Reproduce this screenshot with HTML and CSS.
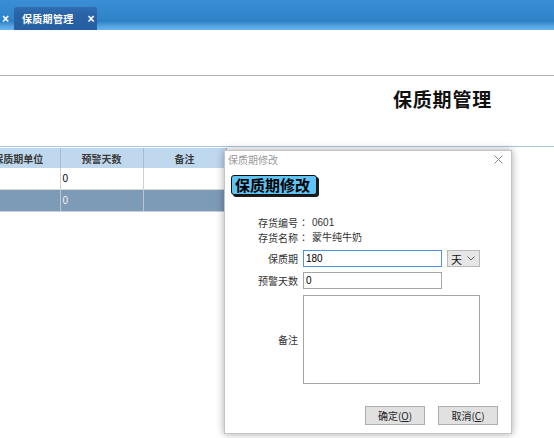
FILE: index.html
```html
<!DOCTYPE html>
<html lang="zh">
<head>
<meta charset="utf-8">
<title>保质期管理</title>
<link rel="stylesheet" href="styles.css">
</head>
<body>
<div class="topbar">
  <span class="tab-x-left">×</span>
  <div class="tab"><span class="tab-label">保质期管理</span><span class="tab-x">×</span></div>
</div>
<div class="spacer"></div>
<div class="rule"></div>
<div class="titlebar"><h1 class="page-title">保质期管理</h1></div>
<div class="gridline"></div>
<div class="grid-wrap">
  <table class="grid">
    <thead>
      <tr><th>保质期单位</th><th>预警天数</th><th>备注</th></tr>
    </thead>
    <tbody>
      <tr class="row"><td></td><td>0</td><td></td></tr>
      <tr class="row selected"><td></td><td>0</td><td></td></tr>
    </tbody>
  </table>
</div>

<div class="dialog">
  <div class="dlg-head">
    <span class="dlg-title">保质期修改</span>
    <svg class="dlg-close" width="9" height="9" viewBox="0 0 9 9"><path d="M0.5 0.5L8.5 8.5M8.5 0.5L0.5 8.5" stroke="#8a8a8a" stroke-width="1" fill="none"/></svg>
  </div>
  <div class="badge">保质期修改</div>
  <div class="info">
    <div class="line"><span class="lbl">存货编号</span><span class="colon">：</span><span class="val">0601</span></div>
    <div class="line"><span class="lbl">存货名称</span><span class="colon">：</span><span class="val">蒙牛纯牛奶</span></div>
  </div>
  <div class="frow">
    <span class="lbl">保质期</span>
    <div class="input focus">180</div>
    <div class="select"><span>天</span>
      <svg width="8" height="5" viewBox="0 0 8 5"><path d="M0.5 0.5L4 4L7.5 0.5" stroke="#666" fill="none"/></svg>
    </div>
  </div>
  <div class="frow">
    <span class="lbl">预警天数</span>
    <div class="input">0</div>
  </div>
  <div class="frow area-row">
    <span class="lbl">备注</span>
    <div class="textarea"></div>
  </div>
  <div class="buttons">
    <div class="btn">确定(<u>O</u>)</div>
    <div class="btn">取消(<u>C</u>)</div>
  </div>
</div>
</body>
</html>
```
FILE: styles.css
```css
html, body {
  margin: 0;
  padding: 0;
  background: #fff;
  width: 554px;
  height: 438px;
  overflow: hidden;
  font-family: "Liberation Sans", "Noto Sans CJK SC", sans-serif;
  position: relative;
}

.topbar {
  height: 30px;
  display: flex;
  align-items: flex-end;
  background: linear-gradient(#3a8ed4 0px, #2f84ca 18px, #2b7fc5 21px, #4c9cdc 25px, #6cb4ec 30px);
}
.tab-x-left {
  color: #fff;
  font-weight: bold;
  font-size: 12px;
  line-height: 22px;
  width: 14px;
  padding-left: 2px;
  box-sizing: border-box;
}
.tab {
  width: 83px;
  height: 23px;
  background: linear-gradient(#2f6cb0, #2862a5 40%, #2660a2);
  border-radius: 3px 3px 0 0;
  display: flex;
  align-items: center;
  color: #fff;
  font-weight: bold;
  font-size: 10px;
  box-sizing: border-box;
  padding-left: 8px;
}
.tab-label {
  letter-spacing: 0.3px;
  font-family: "Noto Sans CJK SC", sans-serif;
}
.tab-x {
  margin-left: 14px;
  font-size: 12px;
}

.spacer { height: 45px; }
.rule { height: 1px; background: #b4b4b4; }
.titlebar {
  height: 70px;
  padding-right: 62px;
  text-align: right;
  box-sizing: border-box;
  padding-top: 11px;
}
.page-title {
  margin: 0;
  font-size: 19px;
  line-height: 24px;
  font-weight: 600;
  letter-spacing: 0.8px;
  color: #111;
  font-family: "Noto Sans CJK SC", serif;
}
.gridline { height: 1px; background: #a9c7e4; }

.grid-wrap { margin-top: 1px; margin-left: -23px; }
.grid {
  border-collapse: collapse;
  table-layout: fixed;
  font-size: 10px;
}
.grid th, .grid td {
  width: 83px;
  padding: 0 2px;
  box-sizing: border-box;
}
.grid th {
  height: 20px;
  background: #bfd8ee;
  color: #3a3a3a;
  font-weight: bold;
  font-family: "Noto Sans CJK SC", sans-serif;
  border-right: 1px solid #a4bccf;
  text-align: center;
}
.grid td {
  height: 21px;
  border-right: 1px solid #cfcfcf;
  border-bottom: 1px solid #d8d8d8;
  color: #000;
}
.grid .selected td {
  height: 22px;
  background: #7d9ab7;
  color: #f2f2f2;
  border-right: 1px solid #b9c6d2;
  border-bottom: 1px solid #c8d0d8;
}

.dialog {
  position: absolute;
  left: 224px;
  top: 150px;
  width: 288px;
  height: 284px;
  box-sizing: border-box;
  background: #fff;
  border: 1px solid #c4c4c4;
  box-shadow: 0 0 8px rgba(0, 0, 0, 0.35);
  font-size: 10px;
  color: #333;
  font-family: "Liberation Sans", "Noto Sans CJK SC", sans-serif;
}
.dlg-head {
  height: 17px;
  display: flex;
  align-items: center;
  justify-content: space-between;
  padding: 0 8px 0 3px;
}
.dlg-title {
  color: #9a9a9a;
  font-size: 10px;
  font-family: "Noto Sans CJK SC", sans-serif;
}
.badge {
  margin: 7px 0 0 6px;
  width: 86px;
  height: 20px;
  box-sizing: border-box;
  border: 1px solid #111;
  border-radius: 3px;
  background: #5ec4f5;
  box-shadow: 2px 2px 0 #1a1a1a;
  font-size: 15px;
  font-weight: bold;
  line-height: 18px;
  color: #000;
  padding-left: 3px;
  font-family: "Noto Sans CJK SC", sans-serif;
}
.info { margin-top: 20px; }
.line {
  display: flex;
  height: 15px;
  line-height: 15px;
}
.lbl {
  width: 73px;
  text-align: right;
  font-family: "Noto Sans CJK SC", sans-serif;
  flex: none;
}
.colon { width: 12px; text-align: center; margin-left: 2px; }
.val { font-family: "Liberation Sans", "Noto Sans CJK SC", sans-serif; }

.frow {
  display: flex;
  align-items: center;
  margin-top: 5px;
}
.frow .input, .frow .textarea { margin-left: 5px; }
.input {
  width: 139px;
  height: 17px;
  box-sizing: border-box;
  border: 1px solid #a5a5a5;
  line-height: 15px;
  padding-left: 2px;
  color: #000;
}
.input.focus { border-color: #4d93dc; }
.select {
  margin-left: 5px;
  width: 33px;
  height: 17px;
  box-sizing: border-box;
  border: 1px solid #b9b9b9;
  background: #e6e6e6;
  display: flex;
  align-items: center;
  justify-content: space-between;
  padding: 0 4px 0 3px;
  font-size: 11px;
  color: #111;
  font-family: "Noto Sans CJK SC", sans-serif;
}
.area-row { margin-top: 6px; }
.textarea {
  width: 177px;
  height: 89px;
  box-sizing: border-box;
  border: 1px solid #a5a5a5;
}
.buttons {
  display: flex;
  margin-top: 22px;
  padding-left: 140px;
  gap: 13px;
}
.btn {
  width: 60px;
  height: 19px;
  box-sizing: border-box;
  border: 1px solid #adadad;
  background: #e1e1e1;
  text-align: center;
  line-height: 17px;
  color: #222;
  font-family: "Noto Sans CJK SC", sans-serif;
}
.btn u { text-underline-offset: 1px; }
```
